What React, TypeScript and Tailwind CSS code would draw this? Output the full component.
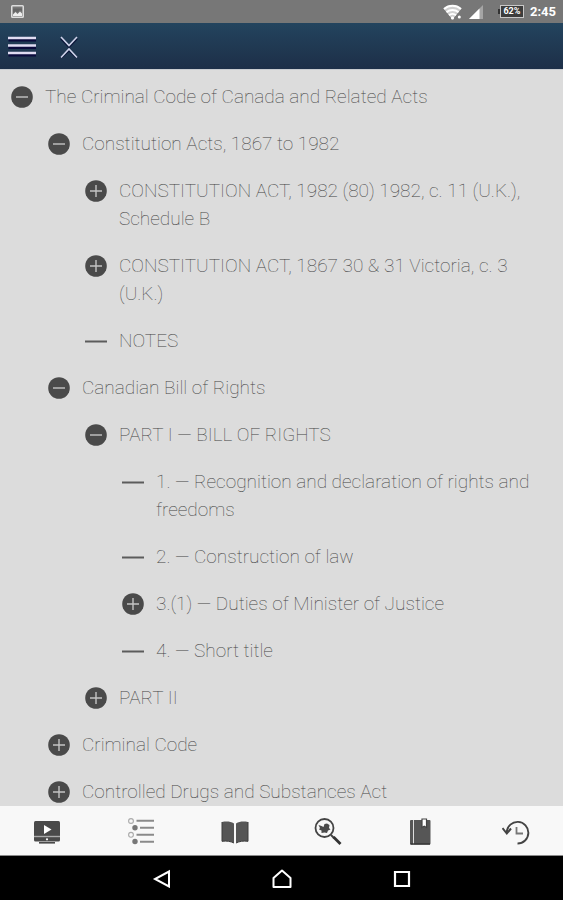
import { useState, type ReactNode } from "react";

interface TocNode {
  title: string;
  open?: boolean;
  children?: TocNode[];
  closed?: boolean;
}

const toc: TocNode[] = [
  {
    title: "The Criminal Code of Canada and Related Acts",
    open: true,
    children: [
      {
        title: "Constitution Acts, 1867 to 1982",
        open: true,
        children: [
          { title: "CONSTITUTION ACT, 1982 (80) 1982, c. 11 (U.K.), Schedule B", closed: true },
          { title: "CONSTITUTION ACT, 1867 30 & 31 Victoria, c. 3 (U.K.)", closed: true },
          { title: "NOTES" },
        ],
      },
      {
        title: "Canadian Bill of Rights",
        open: true,
        children: [
          {
            title: "PART I — BILL OF RIGHTS",
            open: true,
            children: [
              { title: "1. — Recognition and declaration of rights and freedoms" },
              { title: "2. — Construction of law" },
              { title: "3.(1) — Duties of Minister of Justice", closed: true },
              { title: "4. — Short title" },
            ],
          },
          { title: "PART II", closed: true },
        ],
      },
      { title: "Criminal Code", closed: true },
      { title: "Controlled Drugs and Substances Act", closed: true },
    ],
  },
];

function Marker({ kind }: { kind: "plus" | "minus" | "leaf" }) {
  return (
    <svg viewBox="0 0 22 22" className="mt-[3px] size-[22px] shrink-0" aria-hidden="true">
      {kind === "leaf" ? (
        <path d="M0 11.5H22" stroke="#5c5c5c" strokeWidth="2" />
      ) : (
        <>
          <circle cx="11" cy="11" r="10.8" fill="#4a4a4a" />
          <path
            d={kind === "plus" ? "M5 11H17M11 5V17" : "M5 11H17"}
            stroke="#c4c4c4"
            strokeWidth="1.4"
          />
        </>
      )}
    </svg>
  );
}

function TocItem({ node }: { node: TocNode }) {
  const [open, setOpen] = useState(Boolean(node.open));
  const isBranch = Boolean(node.children || node.closed);
  const rowClass = "flex w-full items-start gap-3 text-left";

  return (
    <li className="flex flex-col gap-[19px]">
      {isBranch ? (
        <button type="button" aria-expanded={open} onClick={() => setOpen(!open)} className={rowClass}>
          <Marker kind={open ? "minus" : "plus"} />
          <span>{node.title}</span>
        </button>
      ) : (
        <a href="#section" className={rowClass}>
          <Marker kind="leaf" />
          <span>{node.title}</span>
        </a>
      )}
      {open && node.children && (
        <ul className="flex flex-col gap-[19px] pl-[37px]">
          {node.children.map((child) => (
            <TocItem key={child.title} node={child} />
          ))}
        </ul>
      )}
    </li>
  );
}

function StatusBar() {
  return (
    <div className="flex h-[23px] shrink-0 items-center bg-[#777777] pr-[7px] pl-[11px] text-white">
      <svg viewBox="0 0 13 13" className="size-[13px]" aria-hidden="true">
        <rect x="0.75" y="0.75" width="11.5" height="11.5" rx="0.8" fill="#777" stroke="#ddd" strokeWidth="1.5" />
        <path d="M2 3.5H11V6L9 5L6.5 7.5L4.5 6L2 8Z" fill="#666" />
        <path d="M2 11V9.5L4.5 7L6.5 9L9 6.5L11 8.5V11Z" fill="#eee" />
      </svg>
      <svg viewBox="0 0 20 16" className="ml-auto h-4 w-5" aria-hidden="true">
        <path d="M0.5 4.5C6 -0.3 13 -0.3 18.5 4.5L9.5 15.5Z" fill="#d0d0d0" />
        <g fill="none" stroke="#fff" strokeWidth="2">
          <path d="M1 5C6 0.8 13 0.8 18 5" />
          <path d="M3.5 8.3C7 5.3 12 5.3 15.5 8.3" />
          <path d="M6 11.3C8 9.5 11 9.5 13 11.3" />
        </g>
        <circle cx="9.5" cy="14" r="1.6" fill="#fff" />
        <circle cx="16.3" cy="13" r="1.5" fill="#fff" />
      </svg>
      <svg viewBox="0 0 15 14" className="ml-1.5 h-3.5 w-[15px]" aria-hidden="true">
        <path d="M14 0V14H0Z" fill="#a5a5a5" />
        <path d="M10.5 3.5V14H0Z" fill="#fff" />
      </svg>
      <div className="ml-3.5 flex items-center">
        <span className="h-[5px] w-0.5 bg-[#333]" />
        <span className="flex h-[13px] w-6 items-center justify-center border border-[#c8c8c8] bg-[#3c3c3c] text-[9px] leading-none font-bold">
          62%
        </span>
      </div>
      <span className="ml-1.5 text-[13px] leading-none font-bold">2:45</span>
    </div>
  );
}

function Header() {
  return (
    <header className="flex h-[46px] shrink-0 items-center gap-6 bg-linear-to-b from-[#23445e] to-[#1d2f48] px-2">
      <button type="button" aria-label="Menu">
        <svg viewBox="0 0 28 22" className="h-[22px] w-7" aria-hidden="true">
          <path d="M0.5 5H28M0.5 12.5H28M0.5 20H28" stroke="#0b0b3c" strokeWidth="3" />
          <path d="M0 3H28M0 10.5H28M0 18H28" stroke="#e0dcf2" strokeWidth="2.6" />
        </svg>
      </button>
      <button type="button" aria-label="Collapse all">
        <svg viewBox="0 0 18 24" className="h-6 w-[18px]" fill="none" aria-hidden="true">
          <path d="M1 4.5L9 13L17 4.5M1 24L9 16.5L17 24" stroke="#0b1638" strokeWidth="2" />
          <path d="M1 3L9 11.5L17 3M1 23.5L9 15L17 23.5" stroke="#cfd3ea" strokeWidth="1.6" />
        </svg>
      </button>
    </header>
  );
}

function TabIcon({ children }: { children: ReactNode }) {
  return (
    <svg viewBox="0 0 28 28" className="size-7" fill="none" aria-hidden="true">
      {children}
    </svg>
  );
}

const tabs: { label: string; icon: ReactNode }[] = [
  {
    label: "Media",
    icon: (
      <>
        <rect x="1" y="3" width="26" height="20.5" rx="1.5" fill="#4a4a4a" />
        <path d="M1 18.5H27" stroke="#aaa" strokeWidth="1.4" />
        <path d="M11 7L18.5 11.5L11 16Z" fill="#fff" />
        <circle cx="14" cy="21.3" r="1.1" fill="#fff" />
        <path d="M6 24.8H22" stroke="#4a4a4a" strokeWidth="1.6" />
      </>
    ),
  },
  {
    label: "Contents",
    icon: (
      <>
        <path d="M9.5 2.7H27M13 9.7H27M9.5 16.7H27M13 23.7H27" stroke="#8a8a8a" strokeWidth="2" />
        <circle cx="4" cy="3" r="2.4" stroke="#aaa" strokeWidth="1.1" />
        <circle cx="4" cy="16.8" r="2.4" stroke="#aaa" strokeWidth="1.1" />
        <circle cx="8" cy="9.8" r="2.7" fill="#777" />
        <circle cx="8" cy="23.5" r="2.7" fill="#777" />
      </>
    ),
  },
  {
    label: "Read",
    icon: (
      <>
        <path d="M1 4C6 3 9.5 3.5 13 5.5V25C9.5 23.3 6 22.8 1 23.3Z" fill="#565656" />
        <path d="M27 4C22 3 18.5 3.5 15 5.5V25C18.5 23.3 22 22.8 27 23.3Z" fill="#565656" />
        <path d="M1 4V23.3C6 22.8 9.5 23.3 13 25M27 4V23.3C22 22.8 18.5 23.3 15 25" stroke="#3c3c3c" />
      </>
    ),
  },
  {
    label: "Search",
    icon: (
      <>
        <circle cx="10.5" cy="10" r="9" stroke="#444" strokeWidth="1.8" />
        <path d="M17 17L20 20" stroke="#444" strokeWidth="2" />
        <path d="M19.5 19L26.5 26" stroke="#333" strokeWidth="2.8" />
        <path
          d="M4.5 7L7.5 8L9.5 9L10.5 6L13 5.5L15.5 7L15 10L16.5 11.5L14 12.5L13 15L10.5 14.5L7.5 15L7.5 12.5L5 11.5L6 10Z"
          fill="#4a4a4a"
        />
      </>
    ),
  },
  {
    label: "Bookmarks",
    icon: (
      <>
        <rect x="2" y="2" width="20.5" height="24.5" rx="1" fill="#565656" />
        <path d="M5.5 2V26.5" stroke="#ddd" strokeWidth="1" />
        <path d="M2.5 26H22" stroke="#333" strokeWidth="1.4" />
        <path d="M14 1H18.5V9.5L16.2 8.3L14 9.5Z" fill="#fff" stroke="#444" strokeWidth="1.2" />
      </>
    ),
  },
  {
    label: "History",
    icon: (
      <>
        <path d="M4.8 14A10.8 10.8 0 1 1 15.5 25.5" stroke="#444" strokeWidth="1.9" />
        <path d="M0.5 10L4.8 15.5L9 10.5" stroke="#444" strokeWidth="2" />
        <path d="M14.5 9V15.5H21" stroke="#777" strokeWidth="1.8" />
      </>
    ),
  },
];

export default function App() {
  return (
    <div className="flex h-screen flex-col bg-[#dcdcdc] font-['Roboto',sans-serif]">
      <StatusBar />
      <Header />
      <main className="min-h-0 flex-1 overflow-y-auto border-t border-[#c8ccd0] pt-[13px] pr-6 pl-[11px] text-[19px] leading-7 font-thin text-[#444] [scrollbar-width:none]">
        <ul className="flex flex-col gap-[19px]">
          {toc.map((node) => (
            <TocItem key={node.title} node={node} />
          ))}
        </ul>
      </main>
      <nav className="grid h-[50px] shrink-0 grid-cols-6 border-b border-[#8a8a8a] bg-[#f8f8f8]">
        {tabs.map((tab) => (
          <button key={tab.label} type="button" aria-label={tab.label} className="flex items-center justify-center pt-0.5">
            <TabIcon>{tab.icon}</TabIcon>
          </button>
        ))}
      </nav>
      <div className="flex h-11 shrink-0 items-center justify-center gap-[100px] bg-black">
        <button type="button" aria-label="Back">
          <svg viewBox="0 0 20 20" className="size-5" fill="none" stroke="#fff" strokeWidth="2" aria-hidden="true">
            <path d="M17 3.5V18.5L3 11Z" />
          </svg>
        </button>
        <button type="button" aria-label="Home">
          <svg viewBox="0 0 20 20" className="size-5" fill="none" stroke="#fff" strokeWidth="2" aria-hidden="true">
            <path d="M1.5 10L10 2.5L18.5 10V19H1.5Z" strokeLinejoin="round" />
          </svg>
        </button>
        <button type="button" aria-label="Recent apps">
          <svg viewBox="0 0 20 20" className="size-5" fill="none" stroke="#fff" strokeWidth="2.2" aria-hidden="true">
            <path d="M3 4H17V18H3Z" />
          </svg>
        </button>
      </div>
    </div>
  );
}
